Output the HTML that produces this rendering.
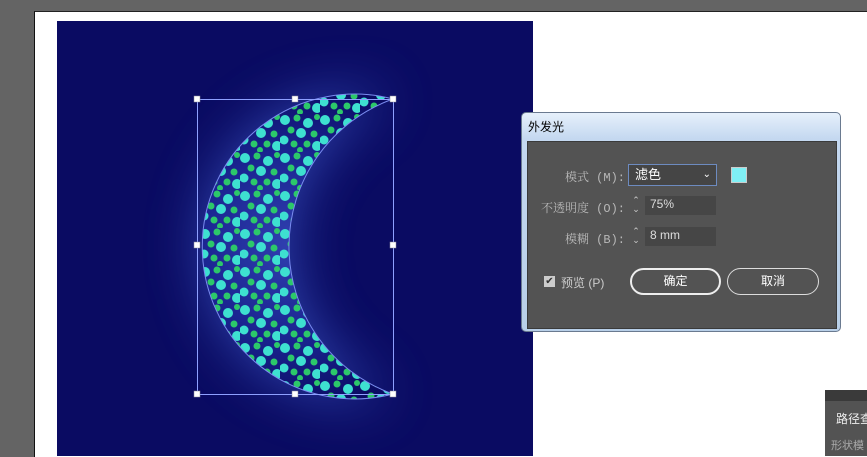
<!DOCTYPE html>
<html><head><meta charset="utf-8"><style>
body{margin:0;width:867px;height:456px;overflow:hidden;background:#646464;position:relative;font-family:"Liberation Sans","Noto Sans CJK SC",sans-serif}
.abs{position:absolute}
.lbl{position:absolute;color:#b8b8b8;font-size:12px;text-align:right;width:100px;font-family:"Liberation Mono","Noto Serif CJK SC",serif}
</style></head><body>
<div class="abs" style="left:34px;top:11px;width:833px;height:445px;background:#fff;border-left:1px solid #111;border-top:1px solid #222"></div>
<svg class="abs" style="left:57px;top:21px" width="476" height="435" viewBox="57 21 476 435">
<defs>
<radialGradient id="g" cx="290" cy="245" r="170" gradientUnits="userSpaceOnUse">
<stop offset="0" stop-color="#3040b0"/><stop offset="0.55" stop-color="#1a2490"/><stop offset="1" stop-color="#0a0b62"/></radialGradient>
<pattern id="p" width="40" height="38" patternUnits="userSpaceOnUse">
<circle cx="5" cy="6" r="5" fill="#3ee0d0"/><circle cx="17" cy="4" r="3.5" fill="#2cc86a"/>
<circle cx="28" cy="9" r="5" fill="#3ee0d0"/><circle cx="37" cy="3" r="3" fill="#2cc86a"/>
<circle cx="11" cy="16" r="3.5" fill="#2cc86a"/><circle cx="21" cy="19" r="5" fill="#3ee0d0"/>
<circle cx="34" cy="20" r="3.5" fill="#2cc86a"/><circle cx="4" cy="26" r="4.5" fill="#3ee0d0"/>
<circle cx="14" cy="30" r="3.5" fill="#2cc86a"/><circle cx="27" cy="30" r="3.5" fill="#2cc86a"/>
<circle cx="37" cy="32" r="5" fill="#3ee0d0"/><circle cx="20" cy="36" r="3" fill="#2cc86a"/>
</pattern>
<filter id="b" x="-1" y="-1" width="3" height="3"><feGaussianBlur stdDeviation="28"/></filter>
</defs>
<rect x="57" y="21" width="476" height="435" fill="#0a0b62"/>
<path d="M393 99 A152.4 152.4 0 1 0 393 394 A156.6 156.6 0 0 1 393 99Z" fill="#4a6ae0" opacity="0.6" filter="url(#b)"/>
<path d="M393 99 A152.4 152.4 0 1 0 393 394 A156.6 156.6 0 0 1 393 99Z" fill="url(#g)"/>
<path d="M393 99 A152.4 152.4 0 1 0 393 394 A156.6 156.6 0 0 1 393 99Z" fill="url(#p)" stroke="#7a8cf0" stroke-width="1"/>
<rect x="197.5" y="99.5" width="196" height="295" fill="none" stroke="#8ea0ff" stroke-width="1"/>
<g fill="#fff" stroke="#889" stroke-width="0.5">
<rect x="194" y="96" width="6" height="6"/><rect x="292" y="96" width="6" height="6"/><rect x="390" y="96" width="6" height="6"/>
<rect x="194" y="242" width="6" height="6"/><rect x="390" y="242" width="6" height="6"/>
<rect x="194" y="391" width="6" height="6"/><rect x="292" y="391" width="6" height="6"/><rect x="390" y="391" width="6" height="6"/></g>
</svg>
<div class="abs" style="left:521px;top:112px;width:318px;height:218px;border:1px solid #6a7a90;border-radius:5px;background:linear-gradient(#e6f0fb,#c4d8f0 12%,#b8cfe8);"></div>
<div class="abs" style="left:528px;top:118px;font-size:12px;color:#000">外发光</div>
<div class="abs" style="left:527px;top:141px;width:308px;height:186px;background:#535353;border:1px solid #3a3a3a"></div>
<div class="lbl" style="left:525px;top:168px">模式 (M):</div>
<div class="abs" style="left:628px;top:164px;background:#454545;border:1px solid #6d8bc0;color:#fff;font-size:13px;line-height:20px;padding-left:6px;box-sizing:border-box;width:89px;height:22px">滤色<span style="position:absolute;right:5px;top:0;font-size:10px">⌄</span></div>
<div class="abs" style="left:731px;top:167px;width:16px;height:16px;background:#7ff0f5;border:1px solid #ccc;box-sizing:border-box"></div>
<div class="lbl" style="left:525px;top:199px">不透明度 (O):</div>
<div class="abs" style="left:629px;top:196px;width:14px;height:19px;color:#ccc;font-size:9px;line-height:9px;text-align:center">⌃<br>⌄</div>
<div class="abs" style="left:645px;top:196px;width:71px;height:19px;background:#464646;color:#ddd;font-size:12px;line-height:16px;padding-left:5px;box-sizing:border-box">75%</div>
<div class="lbl" style="left:525px;top:230px">模糊 (B):</div>
<div class="abs" style="left:629px;top:227px;width:14px;height:19px;color:#ccc;font-size:9px;line-height:9px;text-align:center">⌃<br>⌄</div>
<div class="abs" style="left:645px;top:227px;width:71px;height:19px;background:#464646;color:#ddd;font-size:12px;line-height:16px;padding-left:5px;box-sizing:border-box">8 mm</div>
<div class="abs" style="left:544px;top:276px;width:11px;height:11px;background:#ccc;color:#333;font-size:10px;line-height:11px;text-align:center">✔</div>
<div class="abs" style="left:561px;top:274px;color:#ccc;font-size:12px">预览 (P)</div>
<div class="abs" style="left:630px;top:268px;width:91px;height:27px;border:2px solid #eee;border-radius:14px;box-sizing:border-box;color:#fff;font-size:12px;text-align:center;line-height:23px">确定</div>
<div class="abs" style="left:727px;top:268px;width:92px;height:27px;border:1.5px solid #ddd;border-radius:14px;box-sizing:border-box;color:#fff;font-size:12px;text-align:center;line-height:24px">取消</div>
<div class="abs" style="left:825px;top:390px;width:42px;height:66px;background:#535353"></div>
<div class="abs" style="left:825px;top:390px;width:42px;height:11px;background:#3a3a3a"></div>
<div class="abs" style="left:836px;top:410px;color:#eee;font-size:12px;white-space:nowrap">路径查</div>
<div class="abs" style="left:831px;top:437px;color:#aaa;font-size:11px;white-space:nowrap">形状模</div>
</body></html>
